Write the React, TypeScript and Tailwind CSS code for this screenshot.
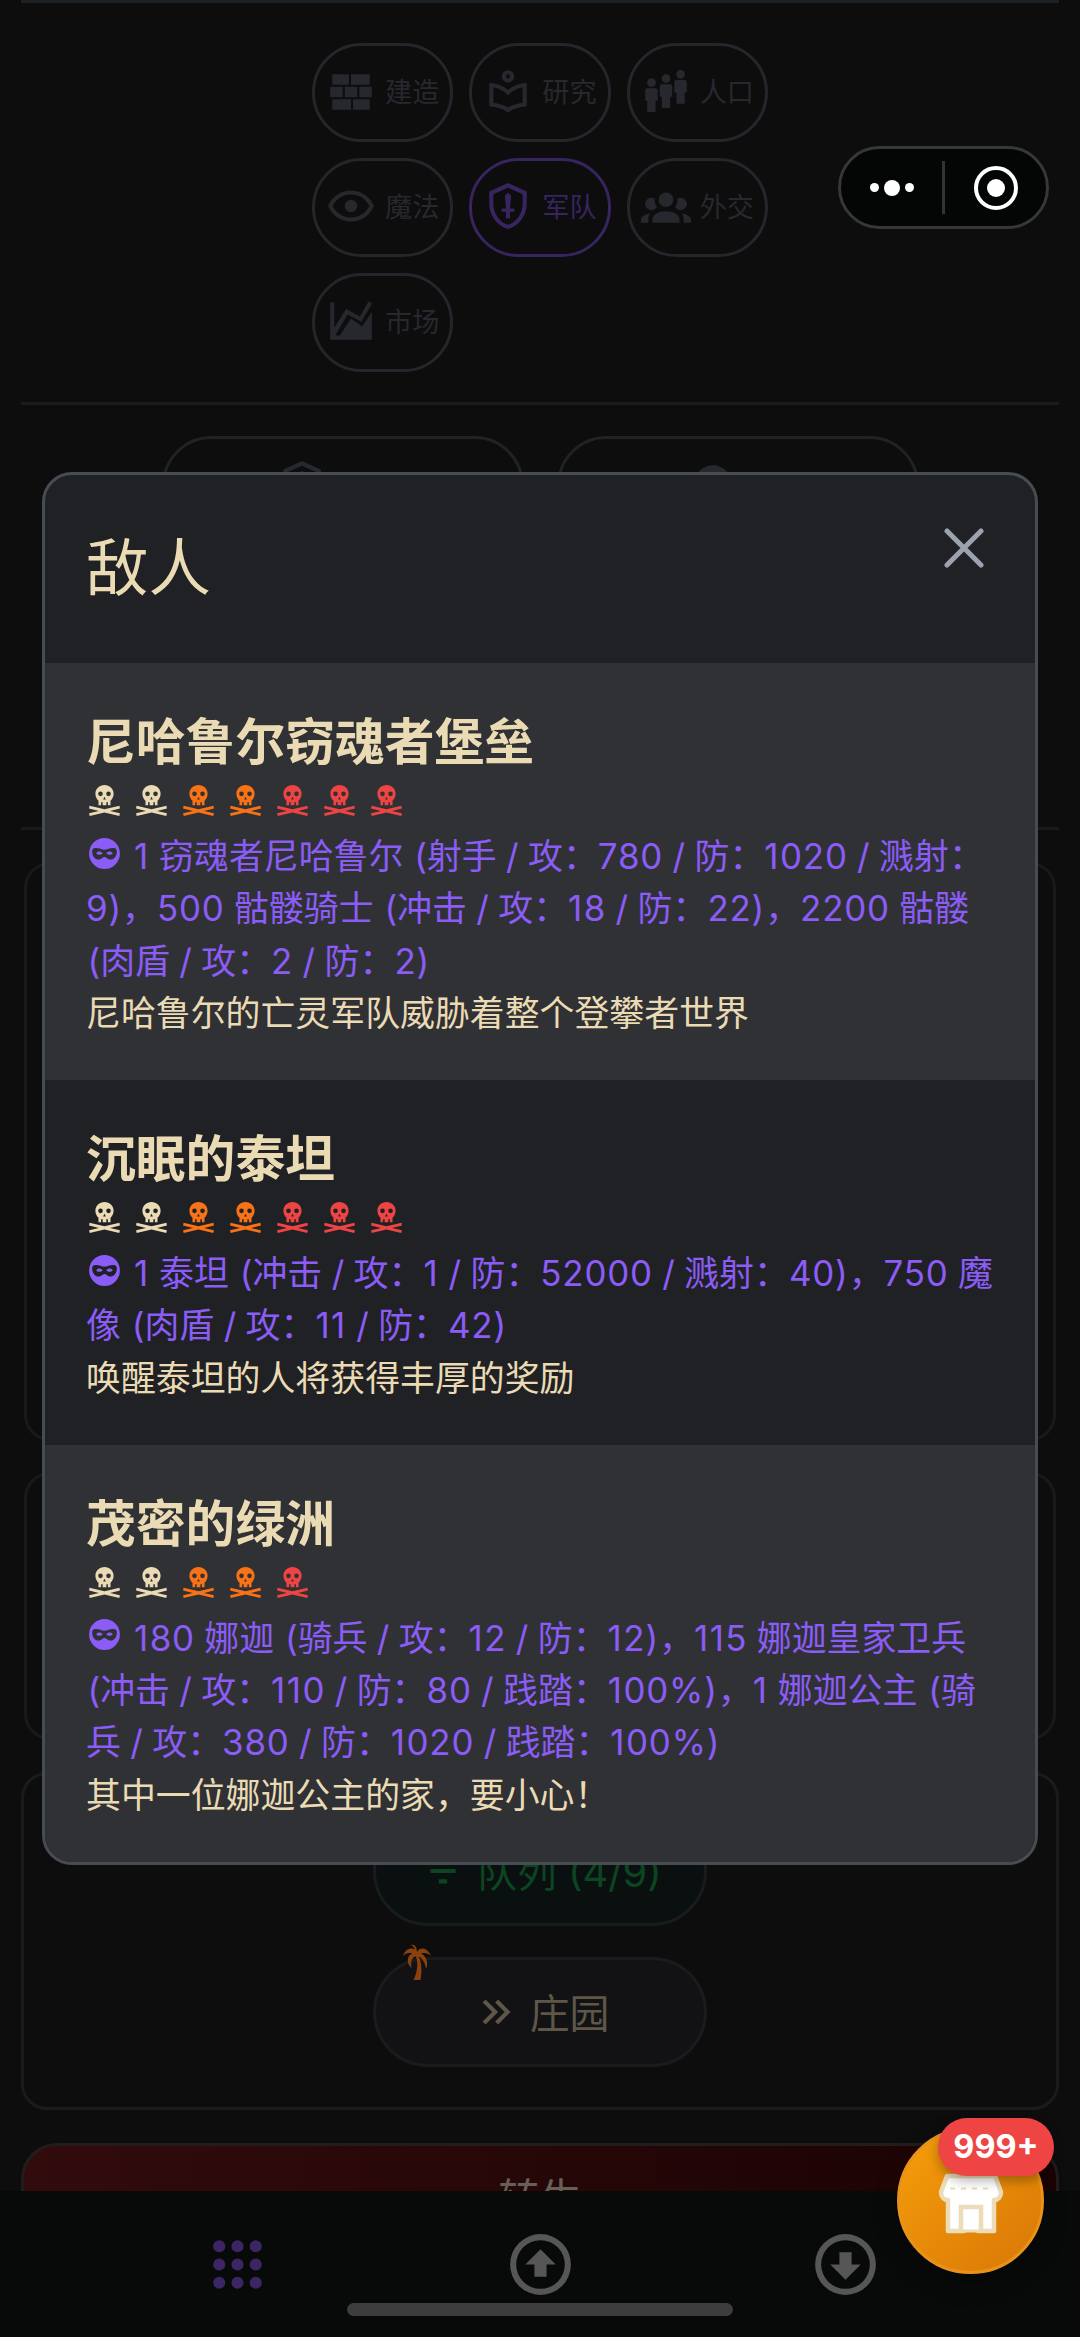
import React from 'react';

type TSkull = 'plain' | 'orange' | 'red';

type TEnemy = {
  id: number;
  name: string;
  skulls: TSkull[];
  army: string[];
  text: string;
};

type TTab = {
  id: string;
  label: string;
  path: string;
  active?: boolean;
};

const person = (x: number, y: number) =>
  `M${x} ${y - 2.1}a2.1 2.1 0 1 1 0 4.2a2.1 2.1 0 1 1 0 -4.2Z` +
  `M${x - 2} ${y + 2.7}h4a1 1 0 0 1 1 1v5h-1v5.4h-4v-5.4h-1v-5a1 1 0 0 1 1 -1Z`;

// иконки вкладок, сетка 24x24
const tabs: TTab[] = [
  {
    id: 'build',
    label: '建造',
    path: 'M3,16H12V21H3V16M2,10H8V15H2V10M9,10H15V15H9V10M16,10H22V15H16V10M13,16H21V21H13V16M3,4H11V9H3V4M12,4H21V9H12V4Z',
  },
  {
    id: 'research',
    label: '研究',
    path: 'M12,2A3,3 0 1,1 12,8A3,3 0 1,1 12,2M12,4A1,1 0 1,0 12,6A1,1 0 1,0 12,4M12,22.3C9.6,20.6 6.5,19.5 3,19.3V8C6.5,8.2 9.6,9.4 12,11.5C14.4,9.4 17.5,8.2 21,8V19.3C17.5,19.5 14.4,20.6 12,22.3M5,10.2V17.6C7.6,17.9 10,18.7 12,19.9C14,18.7 16.4,17.9 19,17.6V10.2C16.4,10.7 14,12 12,14C10,12 7.6,10.7 5,10.2Z',
  },
  {
    id: 'people',
    label: '人口',
    path: person(5, 8) + person(12, 6) + person(19, 4),
  },
  {
    id: 'magic',
    label: '魔法',
    path: 'M12,9A3,3 0 0,1 15,12A3,3 0 0,1 12,15A3,3 0 0,1 9,12A3,3 0 0,1 12,9M12,4.5C17,4.5 21.27,7.61 23,12C21.27,16.39 17,19.5 12,19.5C7,19.5 2.73,16.39 1,12C2.73,7.61 7,4.5 12,4.5M3.18,12C4.83,15.36 8.24,17.5 12,17.5C15.76,17.5 19.17,15.36 20.82,12C19.17,8.64 15.76,6.5 12,6.5C8.24,6.5 4.83,8.64 3.18,12Z',
  },
  {
    id: 'army',
    label: '军队',
    active: true,
    path: 'M21,11C21,16.55 17.16,21.74 12,23C6.84,21.74 3,16.55 3,11V5L12,1L21,5V11M12,21C15.75,20 19,15.54 19,11.22V6.3L12,3.18L5,6.3V11.22C5,15.54 8.25,20 12,21M12,5.6L13.5,7L13,13.2H15V14.8H13V18H11V14.8H9V13.2H11L10.5,7Z',
  },
  {
    id: 'diplomacy',
    label: '外交',
    path: 'M12,5.5A3.5,3.5 0 0,1 15.5,9A3.5,3.5 0 0,1 12,12.5A3.5,3.5 0 0,1 8.5,9A3.5,3.5 0 0,1 12,5.5M5,8C5.56,8 6.08,8.15 6.53,8.42C6.38,9.85 6.8,11.27 7.66,12.38C7.16,13.34 6.16,14 5,14A3,3 0 0,1 2,11A3,3 0 0,1 5,8M19,8A3,3 0 0,1 22,11A3,3 0 0,1 19,14C17.84,14 16.84,13.34 16.34,12.38C17.2,11.27 17.62,9.85 17.47,8.42C17.92,8.15 18.44,8 19,8M5.5,18.25C5.5,16.18 8.41,14.5 12,14.5C15.59,14.5 18.5,16.18 18.5,18.25V20H5.5V18.25M0,20V18.5C0,17.11 1.89,15.94 4.45,15.6C3.86,16.28 3.5,17.22 3.5,18.25V20H0M24,20H20.5V18.25C20.5,17.22 20.14,16.28 19.55,15.6C22.11,15.94 24,17.11 24,18.5V20Z',
  },
  {
    id: 'market',
    label: '市场',
    path: 'M2,3H4V15.2L9.6,6.2L16.3,9.8L20.4,2.6L22.1,3.6L17,12.4L10.4,8.9L4.6,18.6L5.4,19H6.6L12,10.8L17.4,14.6L22,7.6V21H2Z',
  },
];

const enemies: TEnemy[] = [
  {
    id: 1,
    name: '尼哈鲁尔窃魂者堡垒',
    skulls: ['plain', 'plain', 'orange', 'orange', 'red', 'red', 'red'],
    army: [
      '1 窃魂者尼哈鲁尔 (射手 / 攻：780 / 防：1020 / 溅射：',
      '9)，500 骷髅骑士 (冲击 / 攻：18 / 防：22)，2200 骷髅',
      '(肉盾 / 攻：2 / 防：2)',
    ],
    text: '尼哈鲁尔的亡灵军队威胁着整个登攀者世界',
  },
  {
    id: 2,
    name: '沉眠的泰坦',
    skulls: ['plain', 'plain', 'orange', 'orange', 'red', 'red', 'red'],
    army: [
      '1 泰坦 (冲击 / 攻：1 / 防：52000 / 溅射：40)，750 魔',
      '像 (肉盾 / 攻：11 / 防：42)',
    ],
    text: '唤醒泰坦的人将获得丰厚的奖励',
  },
  {
    id: 3,
    name: '茂密的绿洲',
    skulls: ['plain', 'plain', 'orange', 'orange', 'red'],
    army: [
      '180 娜迦 (骑兵 / 攻：12 / 防：12)，115 娜迦皇家卫兵',
      '(冲击 / 攻：110 / 防：80 / 践踏：100%)，1 娜迦公主 (骑',
      '兵 / 攻：380 / 防：1020 / 践踏：100%)',
    ],
    text: '其中一位娜迦公主的家，要小心！',
  },
];

const skullColors = {
  plain: 'text-[#eadbb4]',
  orange: 'text-[#f97316]',
  red: 'text-[#ef4444]',
};

const Icon = ({ path, className }: { path: string; className: string }) => (
  <svg viewBox="0 0 24 24" className={className} fill="currentColor" fillRule="evenodd">
    <path d={path} />
  </svg>
);

const Skull = ({ color }: { color: TSkull }) => (
  <svg viewBox="0 0 24 24" className={`size-[37px] ${skullColors[color]}`} fill="currentColor">
    <path
      fillRule="evenodd"
      d="M12,2C15.3,2 17.9,4.4 17.9,7.6C17.9,9.6 17,11.2 15.9,12.1V15.1H14.2V13.2H13.2V15.1H10.8V13.2H9.8V15.1H8.1V12.1C7,11.2 6.1,9.6 6.1,7.6C6.1,4.4 8.7,2 12,2M9.4,6.2A1.5,1.5 0 1,0 9.4,9.2A1.5,1.5 0 1,0 9.4,6.2M14.6,6.2A1.5,1.5 0 1,0 14.6,9.2A1.5,1.5 0 1,0 14.6,6.2M12,9.6L11.1,11.3H12.9Z"
    />
    <path d="M2.3,15.4L12,17.7L21.7,15.4L22,17.2L15.6,18.8L22,20.3L21.6,22L12,19.8L2.4,22L2,20.3L8.4,18.8L2,17.2Z" />
  </svg>
);

// цифры и скобки чуть шире остального текста
const ArmyText = ({ line }: { line: string }) => (
  <span>
    {line.split(/(1|[02-9%]+|[()])/).map((part, i) => {
      if (part === '1') return <span key={i} className="tracking-[1.5px]">1</span>;
      if (part === '(') return <span key={i} className="ml-[1.4px]">(</span>;
      if (part === ')') return <span key={i} className="tracking-[0.9px]">)</span>;
      if (/\d|%/.test(part)) return <span key={i} className="tracking-[0.8px]">{part}</span>;
      return <span key={i} className="[word-spacing:-0.4px]">{part}</span>;
    })}
  </span>
);

const EnemyCard = ({ enemy }: { enemy: TEnemy }) => (
  <div className="px-[41px] pt-[48px] pb-[40.4px] odd:bg-[#303135] even:bg-[#202125]">
    <h3 className="text-[49.8px] leading-[63px] font-bold">{enemy.name}</h3>
    <div className="flex h-[56px] items-start gap-[10px] pt-[8px]">
      {enemy.skulls.map((color, i) => (
        <Skull key={i} color={color} />
      ))}
    </div>
    <div className="text-[#8b5cf6]">
      {enemy.army.map((line, i) => (
        <p key={line} className="flex h-[52.4px] items-center whitespace-nowrap">
          {i === 0 && (
            <Icon
              className="mr-[11px] mb-[6px] size-[37px] shrink-0"
              path="M12,2A10,10 0 1,1 12,22A10,10 0 1,1 12,2M6,8.5C8.5,8.3 10,9.6 12,9.6C14,9.6 15.5,8.3 18,8.5C19.5,8.6 20.1,9.6 20,11C19.8,14 18,15.9 16,15.9C14,15.9 13.2,14.2 12,14.2C10.8,14.2 10,15.9 8,15.9C6,15.9 4.2,14 4,11C3.9,9.6 4.5,8.6 6,8.5M6.6,11.9C7.6,10.3 9.8,10.4 10.8,11.9C9.6,13.2 7.8,13.2 6.6,11.9M17.4,11.9C16.4,10.3 14.2,10.4 13.2,11.9C14.4,13.2 16.2,13.2 17.4,11.9Z"
            />
          )}
          <ArmyText line={line} />
        </p>
      ))}
    </div>
    <p className="leading-[52.4px]">{enemy.text}</p>
  </div>
);

const Modal = () => (
  <div className="absolute top-[472px] left-[42px] w-[996px] overflow-hidden rounded-[30px] border-[3px] border-[#464c51] bg-[#202125] text-[34.9px] text-[#eadbb4]">
    <div className="flex h-[188px] items-start justify-between px-[41px]">
      <h2 className="pt-[49px] text-[62.4px] leading-[90px]">敌人</h2>
      <svg viewBox="0 0 40 40" className="mt-[53px] mr-[10px] size-10 text-[#9ca3af]">
        <path d="M3 3L37 37M37 3L3 37" stroke="currentColor" strokeWidth="5" strokeLinecap="round" />
      </svg>
    </div>
    <div>
      {enemies.map((enemy) => (
        <EnemyCard key={enemy.id} enemy={enemy} />
      ))}
    </div>
  </div>
);

const Tabs = () => (
  <div className="mx-auto mt-[40px] grid w-[456px] grid-cols-3 gap-4">
    {tabs.map((tab) => (
      <button
        key={tab.id}
        className={`flex h-[99px] items-center justify-center gap-[9px] rounded-full border-[3px] text-[27.2px] whitespace-nowrap ${
          tab.active ? 'border-[#38245f] text-[#38245f]' : 'border-[#25262b] text-[#27282d]'
        }`}>
        <Icon path={tab.path} className="mb-[3px] size-[50px] shrink-0" />
        <span className="pt-[2px]">{tab.label}</span>
      </button>
    ))}
  </div>
);

const BottomNav = () => (
  <div className="absolute bottom-0 left-0 h-[146px] w-full bg-[#080909]">
    <div className="flex justify-between pt-[37px] pr-[198.5px] pl-[200.5px] text-[#565656]">
      <Icon
        className="size-[73px] text-[#3b2663]"
        path="M8,6A2,2 0 1,1 4,6A2,2 0 1,1 8,6M14,6A2,2 0 1,1 10,6A2,2 0 1,1 14,6M20,6A2,2 0 1,1 16,6A2,2 0 1,1 20,6M8,12A2,2 0 1,1 4,12A2,2 0 1,1 8,12M14,12A2,2 0 1,1 10,12A2,2 0 1,1 14,12M20,12A2,2 0 1,1 16,12A2,2 0 1,1 20,12M8,18A2,2 0 1,1 4,18A2,2 0 1,1 8,18M14,18A2,2 0 1,1 10,18A2,2 0 1,1 14,18M20,18A2,2 0 1,1 16,18A2,2 0 1,1 20,18Z"
      />
      <Icon
        className="mr-[2px] size-[73px]"
        path="M12,2A10,10 0 1,1 12,22A10,10 0 1,1 12,2M12,4A8,8 0 1,0 12,20A8,8 0 1,0 12,4M12,7L17,12H14V16H10V12H7Z"
      />
      <Icon
        className="size-[73px]"
        path="M12,2A10,10 0 1,1 12,22A10,10 0 1,1 12,2M12,4A8,8 0 1,0 12,20A8,8 0 1,0 12,4M12,17L7,12H10V8H14V12H17Z"
      />
    </div>
    <div className="mx-auto mt-[2px] h-[13px] w-[386px] rounded-full bg-[#3d3d3d]" />
  </div>
);

const ShopButton = () => (
  <div className="absolute top-[2127px] left-[897px] flex size-[147px] items-center justify-center rounded-full border-[3px] border-[#e8921b] bg-linear-135 from-[#f59e0b] to-[#d97706] shadow-[0_10px_24px_rgba(0,0,0,0.25)]">
    <svg viewBox="0 0 66 62" className="mt-[6px] h-[62px] w-[66px]">
      <path
        d="M9 3H57L63 19C63 24 60 27 56 27V58H40V37H26V58H10V27C6 27 3 24 3 19Z"
        fill="#fff"
        stroke="#ecdcb8"
        strokeWidth="4.5"
        strokeLinejoin="round"
      />
      <path d="M23 58V34H43V58" fill="#fff" stroke="#ecdcb8" strokeWidth="4.5" />
      <path d="M12 15.5H54" stroke="#ecdcb8" strokeWidth="2" strokeDasharray="5 6" />
      <path d="M8 58H58" stroke="#ecdcb8" strokeWidth="3" />
    </svg>
    <div className="absolute -top-[12px] left-[38px] flex h-[58px] w-[116px] items-center justify-center rounded-full bg-[#ef4444] text-[32.5px] font-bold text-white shadow-[0_5px_12px_rgba(0,0,0,0.3)]">
      999+
    </div>
  </div>
);

const Capsule = () => (
  <div className="absolute top-[146px] left-[838px] flex h-[83px] w-[211px] items-center rounded-full border-[3px] border-[#363737] bg-[#040606]">
    <div className="flex flex-1 items-center justify-center gap-[5px]">
      <i className="size-[9px] rounded-full bg-white" />
      <i className="size-4 rounded-full bg-white" />
      <i className="size-[9px] rounded-full bg-white" />
    </div>
    <div className="h-[53px] w-[3px] bg-[#323333]" />
    <div className="flex flex-1 items-center justify-center">
      <div className="flex size-11 items-center justify-center rounded-full border-[4px] border-white">
        <i className="size-[18px] rounded-full bg-white" />
      </div>
    </div>
  </div>
);

const App = () => {
  return (
    <div
      lang="zh-CN"
      className="relative h-[2337px] w-[1080px] overflow-hidden bg-[#0d0d0e] font-['Inter','Noto_Sans_CJK_SC',sans-serif]">
      <div className="flex flex-col px-[21px]">
        <div className="h-[3px] bg-[#1c2125]" />
        <Tabs />

        <div className="mt-[30px] h-[3px] bg-[#1a1b1d]" />

        {/* действия армии, почти полностью закрыты окном */}
        <div className="mt-[31px] flex justify-center gap-[33px]">
          <div className="flex h-[99px] w-[362px] justify-center rounded-[50px] border-[3px] border-[#212226] pt-[20px] text-[#27282d]">
            <Icon path={tabs[4].path} className="mr-[82px] size-[50px]" />
          </div>
          <div className="flex h-[99px] w-[362px] justify-center rounded-[50px] border-[3px] border-[#212226] pt-[20px] text-[#27282d]">
            <Icon
              className="mr-[50px] size-[50px]"
              path="M12,3A9,9 0 1,1 12,21A9,9 0 1,1 12,3M16,6L18,9L15.5,12L14.6,8.6Z"
            />
          </div>
        </div>

        <div className="mt-[292px] h-[3px] bg-[#17191b]" />
        <div className="mx-[3px] mt-[32px] h-[579px] rounded-[26px] border-[3px] border-[#17191b]" />
        <div className="mx-[3px] mt-[31px] h-[268px] rounded-[26px] border-[3px] border-[#17191b]" />

        <div className="mt-[32px] flex h-[338px] flex-col items-center gap-[31px] rounded-[26px] border-[3px] border-[#191c1f] pt-[41px] text-[39.8px]">
          <button className="flex h-[110px] w-[334px] shrink-0 items-center justify-center gap-[9px] rounded-full border-[3px] border-[#191c1e] bg-[#0a100f] text-[#0c4521]">
            <Icon
              className="size-[50px]"
              path="M6,13H18V11H6M3,6V8H21V6M10,18H14V16H10V18Z"
            />
            <span className="pt-[3px]">队列 (4/9)</span>
          </button>
          <button className="relative flex h-[110px] w-[334px] shrink-0 items-center justify-center gap-[9px] rounded-full border-[3px] border-[#191c1e] bg-[#121214] text-[#5e5748]">
            <Icon
              className="size-[50px]"
              path="M5.59,7.41L7,6L13,12L7,18L5.59,16.59L10.17,12L5.59,7.41M11.59,7.41L13,6L19,12L13,18L11.59,16.59L16.17,12L11.59,7.41Z"
            />
            <span className="pt-[3px]">庄园</span>
            <svg
              viewBox="0 0 28 36"
              className="absolute -top-[16px] left-[27px] h-9 w-7 text-[#8a410d]"
              fill="currentColor">
              <path d="M14 8C17 2 25 4 28 12C25 9 21 8.500 18 9.500C23 12 26 18 23 25C22 18 19 14 15.500 12.500C19 18 19 28 17.500 36H10.500C14 29 15.500 20 13 12.500C9 13 7.500 17 8.500 24C3 19 4 12 9 9.500C6 8.500 3 9 0 12C2 5 8 3 12 5.500C11 3 10 2 8 1C12 0 14 4 14 8Z" />
            </svg>
          </button>
        </div>

        <button className="mt-[33px] h-[110px] rounded-[36px] border-[3px] border-[#221d1c] bg-linear-to-r from-[#320b0d] via-[#260708] to-[#1b0304] pt-[3px] text-[41.6px] text-[#685f58]">
          转生
        </button>
      </div>

      <BottomNav />
      <Modal />
      <Capsule />
      <ShopButton />
    </div>
  );
};

export default App;
